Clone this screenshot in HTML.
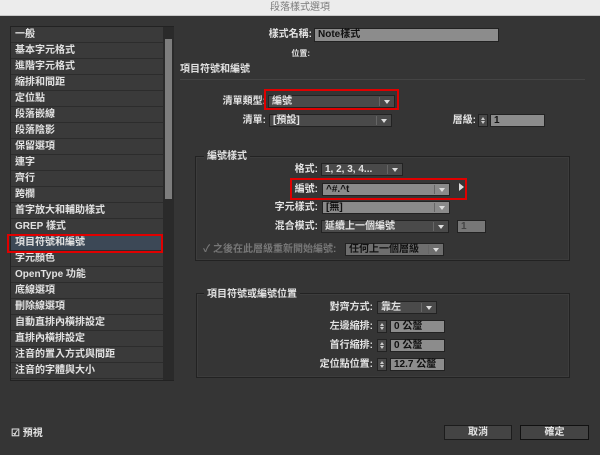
<!DOCTYPE html>
<html><head><meta charset="utf-8"><style>
*{margin:0;padding:0;box-sizing:border-box}
body{width:600px;height:455px;background:#353535;font-family:"Liberation Sans","Noto Sans CJK TC",sans-serif;font-size:10px;line-height:13px;color:#e2e2e2;position:relative;overflow:hidden}
.a{position:absolute;white-space:nowrap}
.title{left:0;top:0;width:600px;height:16px;background:#ececec;color:#7a7a7a;text-align:center;font-size:10px;line-height:16px;border-bottom:1px solid #c8c8c8}
.list{left:10px;top:26px;width:164px;height:355px;background:#3a3a3a;border:1px solid #222}
.it{position:absolute;left:0;width:152px;height:16px;border-bottom:1px solid #2c2c2c;padding-left:4px;line-height:15px;font-weight:bold;font-size:10px}
.sb{position:absolute;left:152px;top:0;width:11px;height:353px;background:#2a2a2a}
.th{position:absolute;left:2px;top:12px;width:7px;height:160px;background:#7d7d7d}
.lbl{font-weight:bold;text-align:right}
.dd{position:absolute;height:13px;background:#4a4a4a;border:1px solid #222;line-height:11px;padding-left:3px;font-weight:bold}
.dd.l{background:#8a8a8a;color:#111}
.dd:after{content:"";position:absolute;right:4px;top:4px;border-left:3px solid transparent;border-right:3px solid transparent;border-top:4px solid #ddd}
.dd .sep{position:absolute;right:14px;top:1px;width:1px;height:9px;background:#666}
.in{position:absolute;height:13px;background:#8c8c8c;border:1px solid #222;color:#111;line-height:11px;padding-left:3px;font-weight:bold}
.sp{position:absolute;width:10px;height:13px;background:#4a4a4a;border:1px solid #222}
.sp:before{content:"";position:absolute;left:2px;top:2px;border-left:2px solid transparent;border-right:2px solid transparent;border-bottom:3px solid #ccc}
.sp:after{content:"";position:absolute;left:2px;bottom:2px;border-left:2px solid transparent;border-right:2px solid transparent;border-top:3px solid #ccc}
.red{position:absolute;border:2px solid #e00000}
.grp{position:absolute;border:1px solid #222;box-shadow:inset 0 0 0 1px #3c3c3c}
.gt{position:absolute;background:#353535;padding:0 3px;font-weight:bold}
.btn{position:absolute;height:15px;background:#444;border:1px solid #1c1c1c;text-align:center;line-height:13px;font-weight:bold}
</style></head><body>
<div class="a title">段落樣式選項</div>
<div class="a list">
<div class="it" style="top:0">一般</div>
<div class="it" style="top:16px">基本字元格式</div>
<div class="it" style="top:32px">進階字元格式</div>
<div class="it" style="top:48px">縮排和間距</div>
<div class="it" style="top:64px">定位點</div>
<div class="it" style="top:80px">段落嵌線</div>
<div class="it" style="top:96px">段落陰影</div>
<div class="it" style="top:112px">保留選項</div>
<div class="it" style="top:128px">連字</div>
<div class="it" style="top:144px">齊行</div>
<div class="it" style="top:160px">跨欄</div>
<div class="it" style="top:176px">首字放大和輔助樣式</div>
<div class="it" style="top:192px">GREP 樣式</div>
<div class="it" style="top:208px;background:#3c4856">項目符號和編號</div>
<div class="it" style="top:224px">字元顏色</div>
<div class="it" style="top:240px">OpenType 功能</div>
<div class="it" style="top:256px">底線選項</div>
<div class="it" style="top:272px">刪除線選項</div>
<div class="it" style="top:288px">自動直排內橫排設定</div>
<div class="it" style="top:304px">直排內橫排設定</div>
<div class="it" style="top:320px">注音的置入方式與間距</div>
<div class="it" style="top:336px">注音的字體與大小</div>
<div class="sb"><div class="th"></div></div>
</div>
<div class="red" style="left:7px;top:234px;width:156px;height:19px"></div>

<div class="a lbl" style="left:240px;top:28px;width:72px">樣式名稱:</div>
<div class="in" style="left:314px;top:28px;width:185px;height:14px;color:#111">Note樣式</div>
<div class="a lbl" style="left:270px;top:47px;width:40px;font-size:8px">位置:</div>
<div class="a" style="left:180px;top:63px;font-weight:bold">項目符號和編號</div>
<div class="a" style="left:180px;top:79px;width:405px;height:1px;background:#444"></div>

<div class="a lbl" style="left:200px;top:95px;width:66px">清單類型:</div>
<div class="dd" style="left:268px;top:95px;width:127px"><span class="sep"></span>編號</div>
<div class="red" style="left:264px;top:89px;width:135px;height:21px"></div>
<div class="a lbl" style="left:200px;top:114px;width:66px">清單:</div>
<div class="dd" style="left:269px;top:114px;width:123px"><span class="sep"></span>[預設]</div>
<div class="a lbl" style="left:440px;top:114px;width:36px">層級:</div>
<div class="sp" style="left:478px;top:114px"></div>
<div class="in" style="left:490px;top:114px;width:55px">1</div>

<div class="grp" style="left:195px;top:156px;width:375px;height:105px"></div>
<div class="gt" style="left:204px;top:150px">編號樣式</div>
<div class="a lbl" style="left:250px;top:163px;width:68px">格式:</div>
<div class="dd" style="left:321px;top:163px;width:82px"><span class="sep"></span>1, 2, 3, 4...</div>
<div class="a lbl" style="left:250px;top:183px;width:68px">編號:</div>
<div class="dd l" style="left:322px;top:183px;width:128px"><span class="sep"></span>^#.^t</div>
<div class="a" style="left:459px;top:183px;width:0;height:0;border-top:4px solid transparent;border-bottom:4px solid transparent;border-left:5px solid #ddd"></div>
<div class="red" style="left:290px;top:178px;width:177px;height:22px"></div>
<div class="a lbl" style="left:250px;top:201px;width:68px">字元樣式:</div>
<div class="dd l" style="left:322px;top:201px;width:128px"><span class="sep"></span>[無]</div>
<div class="a lbl" style="left:250px;top:220px;width:68px">混合模式:</div>
<div class="dd" style="left:321px;top:220px;width:128px"><span class="sep"></span>延續上一個編號</div>
<div class="in" style="left:457px;top:220px;width:29px;background:#777;color:#444">1</div>
<div class="a" style="left:203px;top:243px;color:#777;font-weight:bold">✓ 之後在此層級重新開始編號:</div>
<div class="dd" style="left:345px;top:243px;width:99px;color:#111;background:#6e6e6e"><span class="sep"></span>任何上一個層級</div>

<div class="grp" style="left:196px;top:293px;width:374px;height:85px"></div>
<div class="gt" style="left:204px;top:288px">項目符號或編號位置</div>
<div class="a lbl" style="left:300px;top:301px;width:73px">對齊方式:</div>
<div class="dd" style="left:377px;top:301px;width:60px"><span class="sep"></span>靠左</div>
<div class="a lbl" style="left:300px;top:320px;width:73px">左邊縮排:</div>
<div class="sp" style="left:377px;top:320px"></div><div class="in" style="left:390px;top:320px;width:55px">0 公釐</div>
<div class="a lbl" style="left:300px;top:339px;width:73px">首行縮排:</div>
<div class="sp" style="left:377px;top:339px"></div><div class="in" style="left:390px;top:339px;width:55px">0 公釐</div>
<div class="a lbl" style="left:300px;top:358px;width:73px">定位點位置:</div>
<div class="sp" style="left:377px;top:358px"></div><div class="in" style="left:390px;top:358px;width:55px">12.7 公釐</div>

<div class="btn" style="left:444px;top:425px;width:68px">取消</div>
<div class="btn" style="left:520px;top:425px;width:69px;border-color:#111">確定</div>
<div class="a" style="left:11px;top:427px;font-weight:bold">☑ 預視</div>
</body></html>
